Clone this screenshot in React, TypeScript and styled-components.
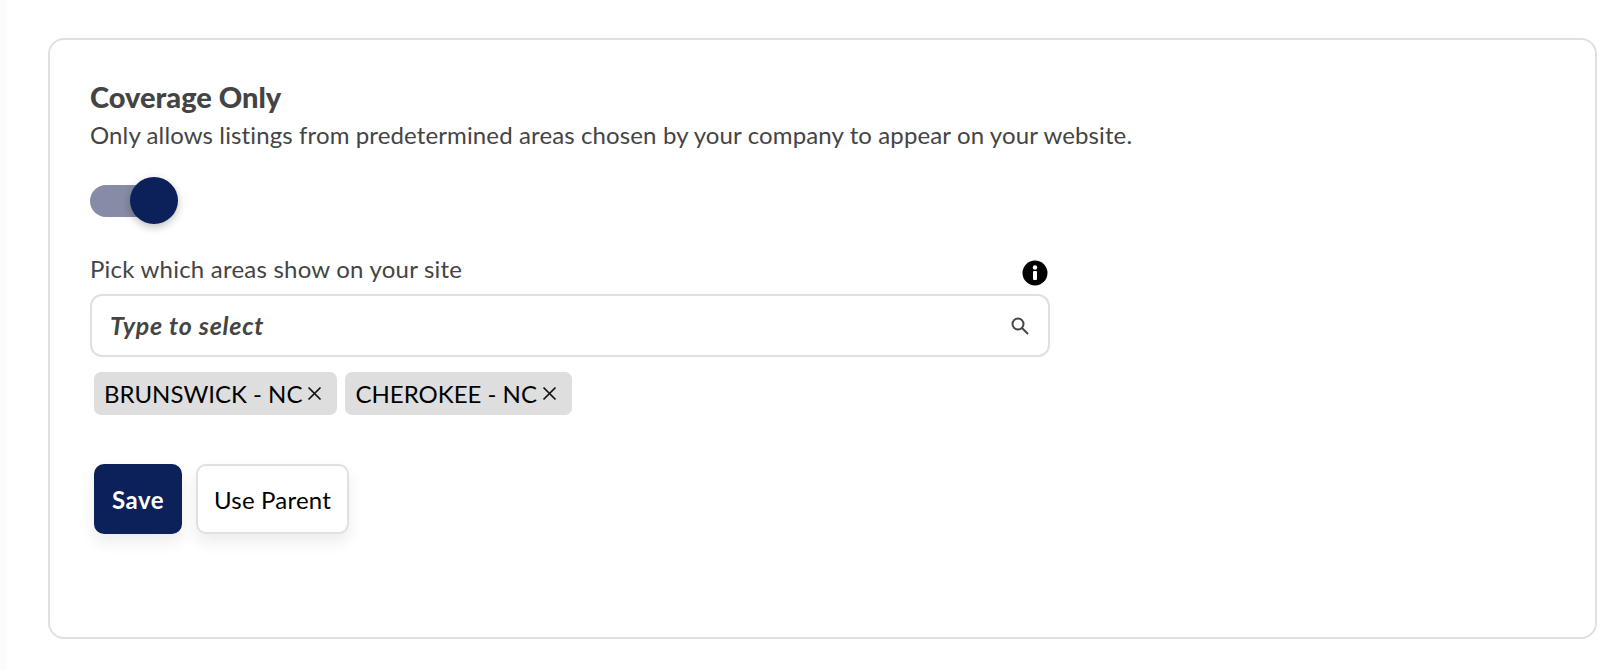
import React from "react";
import styled, { createGlobalStyle } from "styled-components";

const GlobalStyle = createGlobalStyle`
  html, body {
    margin: 0;
    background: #fff;
    font-family: "Lato", "Liberation Sans", sans-serif;
  }
`;

const Page = styled.div`
  box-sizing: border-box;
  width: 1610px;
  height: 670px;
  padding: 38px 13px 0 41px;
  overflow: hidden;
  background: #fff;
  border-left: 7px solid #fcfcfc;
`;

const Card = styled.section`
  box-sizing: border-box;
  height: 601px;
  padding: 41px 40px 0;
  border: 2px solid #e0e0e0;
  border-radius: 16px;
`;

const Title = styled.h2`
  margin: 0;
  font-size: 29px;
  line-height: 32px;
  font-weight: 900;
  color: #444;
`;

const Description = styled.p`
  margin: 8px 0 0;
  font-size: 24px;
  line-height: 28px;
  font-weight: 400;
  letter-spacing: 0.12px;
  color: #444;
`;

const SwitchTrack = styled.div`
  position: relative;
  width: 70px;
  height: 32px;
  margin-top: 36px;
  border-radius: 16px;
  background: #868ca6;
`;

const SwitchKnob = styled.span`
  position: absolute;
  left: 40px;
  top: -8px;
  width: 48px;
  height: 47px;
  border-radius: 50%;
  background: #0c2059;
  box-shadow: 0 3px 8px rgba(0, 0, 0, 0.25);
`;

const Field = styled.div`
  width: 960px;
  margin-top: 38px;
`;

const LabelRow = styled.div`
  display: flex;
  justify-content: space-between;
  align-items: flex-end;
  padding-right: 2px;
`;

const Label = styled.label`
  font-size: 24px;
  line-height: 28px;
  letter-spacing: 0.22px;
  color: #444;
`;

const InfoIcon = styled.svg`
  display: block;
  width: 26px;
  height: 26px;
  margin-bottom: -3px;
`;

const SearchBox = styled.div`
  box-sizing: border-box;
  display: flex;
  align-items: center;
  justify-content: space-between;
  height: 63px;
  margin-top: 11px;
  padding: 0 18px;
  border: 2px solid #e0e0e0;
  border-radius: 12px;
`;

const Placeholder = styled.span`
  margin-bottom: 2px;
  font-size: 25px;
  font-style: italic;
  font-weight: 700;
  letter-spacing: 0.75px;
  color: #444;
`;

const Chips = styled.div`
  display: flex;
  gap: 8px;
  margin: 15px 0 0 4px;
`;

const Chip = styled.div`
  display: flex;
  align-items: center;
  gap: 5px;
  height: 43px;
  padding: 0 15px 0 10px;
  border-radius: 7px;
  background: #dedede;
  font-size: 24px;
  color: #000;
`;

const Actions = styled.div`
  display: flex;
  gap: 14px;
  margin: 49px 0 0 4px;
`;

const Button = styled.button<{ $primary?: boolean }>`
  box-sizing: border-box;
  height: 70px;
  padding: 0 16px;
  border: 2px solid ${(p) => (p.$primary ? "#0c2059" : "#e0e0e0")};
  border-radius: 10px;
  background: ${(p) => (p.$primary ? "#0c2059" : "#fff")};
  color: ${(p) => (p.$primary ? "#fff" : "#000")};
  font-family: inherit;
  font-size: 24px;
  font-weight: ${(p) => (p.$primary ? 700 : 400)};
  letter-spacing: ${(p) => (p.$primary ? "0.5px" : "0.2px")};
  box-shadow: 0 8px 16px rgba(0, 0, 0, 0.08);
`;

const CloseIcon = () => (
  <svg width="15" height="15" viewBox="0 0 15 15" fill="none" stroke="#111" strokeWidth="1.7">
    <path d="M1.5 1.5l12 12M13.5 1.5l-12 12" />
  </svg>
);

const chips = ["BRUNSWICK - NC", "CHEROKEE - NC"];

export default function App() {
  return (
    <Page>
      <GlobalStyle />
      <Card>
        <Title>Coverage Only</Title>
        <Description>
          Only allows listings from predetermined areas chosen by your company to appear on your website.
        </Description>
        <SwitchTrack>
          <SwitchKnob />
        </SwitchTrack>
        <Field>
          <LabelRow>
            <Label>Pick which areas show on your site</Label>
            <InfoIcon viewBox="0 0 26 26">
              <circle cx="13" cy="13" r="12.5" fill="#000" />
              <rect x="11" y="11" width="4" height="9" rx="1" fill="#fff" />
              <circle cx="13" cy="7.5" r="2.2" fill="#fff" />
            </InfoIcon>
          </LabelRow>
          <SearchBox>
            <Placeholder>Type to select</Placeholder>
            <svg width="20" height="20" viewBox="0 0 20 20" fill="none" stroke="#444" strokeWidth="2">
              <circle cx="8" cy="8" r="5.5" />
              <path d="M12 12l6 6" />
            </svg>
          </SearchBox>
          <Chips>
            {chips.map((c) => (
              <Chip key={c}>
                {c}
                <CloseIcon />
              </Chip>
            ))}
          </Chips>
          <Actions>
            <Button $primary>Save</Button>
            <Button>Use Parent</Button>
          </Actions>
        </Field>
      </Card>
    </Page>
  );
}
